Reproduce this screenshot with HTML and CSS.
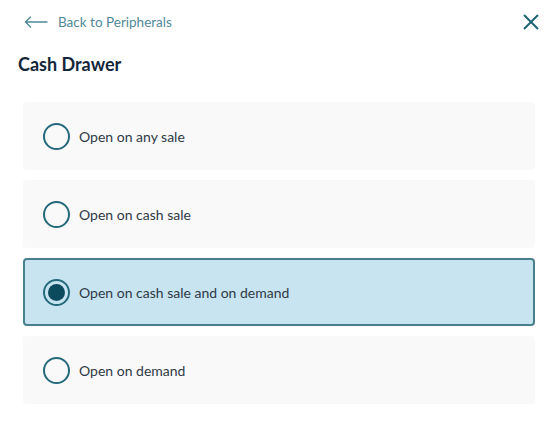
FILE: index.html
```html
<!DOCTYPE html>
<html>
	<head>
		<meta charset="utf-8" lang="en" />
		<title>Cash Drawer</title>
		<link rel="stylesheet" href="styles.css">
	</head>

	<body>
		<div id="panel">
			<div class="topbar">
				<a class="back" href="#">
					<svg class="back-arrow" width="24" height="12" viewBox="0 0 24 12">
						<path d="M23 6H1.5M6.5 1L1.5 6l5 5" fill="none" stroke="#4f8a98" stroke-width="1.4" stroke-linecap="round" stroke-linejoin="round" />
					</svg>
					<span>Back to Peripherals</span>
				</a>
				<svg class="close" width="16" height="16" viewBox="0 0 16 16">
					<path d="M1 1l14 14M15 1L1 15" fill="none" stroke="#1f6475" stroke-width="2" />
				</svg>
			</div>

			<h1>Cash Drawer</h1>

			<ul class="options">
				<li class="option">
					<span class="radio"></span>
					<span class="label">Open on any sale</span>
				</li>
				<li class="option">
					<span class="radio"></span>
					<span class="label">Open on cash sale</span>
				</li>
				<li class="option selected">
					<span class="radio"></span>
					<span class="label">Open on cash sale and on demand</span>
				</li>
				<li class="option">
					<span class="radio"></span>
					<span class="label">Open on demand</span>
				</li>
			</ul>
		</div>
	</body>
</html>
```

FILE: styles.css
```css
body {
	background: #fff;
	color: #2f3a47;
	font-family: Lato, "Open Sans", sans-serif;
	margin: 0;
	padding: 0;
}
ul {
	list-style-type: none;
	margin: 0;
	padding: 0;
}

/* Panel */
#panel { padding: 11px 23px 0 18px; }

.topbar {
	align-items: center;
	display: flex;
	height: 20px;
	justify-content: space-between;
	margin-left: 6px;
	padding-top: 1px;
}
.back {
	align-items: center;
	color: #4f8a98;
	display: flex;
	font-size: 13.5px;
	gap: 10px;
	text-decoration: none;
}
.close { margin-right: -4px; }

h1 {
	color: #13263a;
	font-size: 18px;
	font-weight: 700;
	margin: 21px 0 27px;
}

/* Options */
.options {
	display: flex;
	flex-direction: column;
	gap: 10px;
	margin-left: 5px;
}
.option {
	align-items: center;
	background: #f9f9f9;
	border: 2px solid transparent;
	border-radius: 4px;
	box-sizing: border-box;
	display: flex;
	gap: 9px;
	height: 68px;
	padding: 0 18px;
}
.option.selected {
	background: #c7e4f0;
	border-color: #4a7f8e;
}
.radio {
	border: 2px solid #246a7b;
	border-radius: 50%;
	box-sizing: border-box;
	height: 27px;
	position: relative;
	width: 27px;
}
.selected .radio::after {
	background: #0c4b5e;
	border-radius: 50%;
	content: "";
	height: 17px;
	left: 3px;
	position: absolute;
	top: 3px;
	width: 17px;
}
.label { font-size: 14px; }
```
